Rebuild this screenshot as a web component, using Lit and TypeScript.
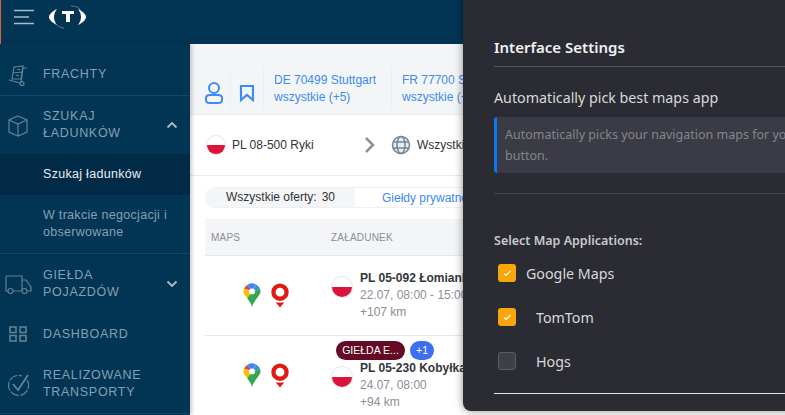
import { LitElement, css, html, svg } from "lit";
import { customElement } from "lit/decorators.js";

const flag = (size: number) => html`<svg class="flag" width=${size} height=${size} viewBox="0 0 22 22">
  <circle cx="11" cy="11" r="10.5" fill="#fff" stroke="#e3e5e8" />
  <path d="M1 11h20a10 10 0 0 1-20 0z" fill="#dc143c" />
</svg>`;

const gmaps = html`<svg width="18" height="25" viewBox="0 0 18 25">
  <path d="M9 24c-1-4-3-6-5-9L9 9z" fill="#34a853" />
  <path d="M9 24c1-4 3-6 5-9 2-2.500 3.500-4.500 3.500-6.500 0-1-.2-2-.6-3L9 9z" fill="#34a853" />
  <path d="M4 15C2 12.500.5 11 .5 8.500c0-1 .2-2 .6-2.800L9 9z" fill="#fbbc04" />
  <path d="M1.100 5.700A8.500 8.500 0 0 1 4 2L9 8z" fill="#ea4335" />
  <path d="M4 2a8.500 8.500 0 0 1 9-.5L9 8z" fill="#4285f4" />
  <path d="M13 1.500a8.500 8.500 0 0 1 3.900 4L9 9z" fill="#4285f4" />
  <circle cx="9" cy="8.500" r="3" fill="#fff" />
</svg>`;

const tomtom = html`<svg width="18" height="25" viewBox="0 0 18 25">
  <path d="M9 .5a8.700 8.700 0 1 1 0 17.400A8.700 8.700 0 0 1 9 .5zm0 4.300a4.400 4.400 0 1 0 0 8.800 4.400 4.400 0 0 0 0-8.800z" fill="#df1b12" fill-rule="evenodd" />
  <path d="M4.800 19.500h8.400L9 24.500z" fill="#df1b12" />
</svg>`;

const navIcons: Record<string, unknown> = {
  cart: svg`<path d="M10 6l9-1-2 13H8zM9 12l9-1M13 8.500h3M12 14.500h3M23 7h-4l-2 15M5 19l11 3" /><circle cx="18" cy="22.500" r="2" />`,
  box: svg`<path d="M14 5l9 4v12l-9 4-9-4V9zM5 9l9 4 9-4M14 13v12" />`,
  truck: svg`<path d="M4 21H2V7q0-1 1-1h15v15M18 10h4l5 7v4h-4M9 21h8" /><circle cx="6.500" cy="21" r="2.500" /><circle cx="20.500" cy="21" r="2.500" />`,
  grid: svg`<g stroke-width="1.600"><rect x="6" y="7" width="6" height="5.500" /><rect x="16" y="7" width="6" height="5.500" /><rect x="6" y="15.500" width="6" height="5.500" /><rect x="16" y="15.500" width="6" height="5.500" /></g>`,
  check: svg`<path d="M23 10a10 10 0 1 1-5-4" stroke-dasharray="9 1.500" /><path d="M9 14l5 6 10-15" stroke-width="1.800" />`,
};

const navIcon = (name: string) => html`<svg class="nav-icon" width="32" height="28" viewBox="0 0 32 28">${navIcons[name]}</svg>`;

const chevron = (up: boolean) => html`<svg class="chev" width="12" height="8" viewBox="0 0 12 8">
  <path d=${up ? "M1.500 6.500L6 2l4.500 4.500" : "M1.500 1.500L6 6l4.500-4.500"} />
</svg>`;

const tick = html`<svg width="10" height="10" viewBox="0 0 10 10"><path d="M2 5.500l2 2 4.500-4.500" fill="none" stroke="#fff" stroke-width="1.200" /></svg>`;

@customElement("app-root")
export class AppRoot extends LitElement {
  static styles = css`
    :host {
      display: block;
      position: relative;
      width: 785px;
      height: 415px;
      overflow: hidden;
      background: #fff;
      font-family: "Liberation Sans", Arial, sans-serif;
      color: #333;
    }
    .topbar {
      height: 44px;
      box-sizing: border-box;
      padding: 0 0 10px 14px;
      background: #023553;
      display: flex;
      align-items: center;
      gap: 15px;
      box-shadow: inset 1px 0 0 #e0603a;
    }
    .body {
      display: flex;
      height: 371px;
    }
    /* sidebar */
    .side {
      width: 190px;
      flex: none;
      background: #023553;
      box-shadow: 2px 0 4px rgba(0, 0, 0, 0.2);
      z-index: 1;
      display: flex;
      flex-direction: column;
    }
    .item {
      display: flex;
      align-items: center;
      box-sizing: border-box;
      color: #82a0b3;
      font-size: 12.500px;
      line-height: 17px;
      letter-spacing: 0.7px;
      position: relative;
    }
    .nav-icon {
      flex: none;
      margin: 0 7px 0 4px;
      fill: none;
      stroke: #5f8299;
      stroke-width: 1.200;
    }
    .chev {
      position: absolute;
      left: 166px;
      fill: none;
      stroke: #a9bdc9;
      stroke-width: 1.800;
    }
    .frachty {
      height: 52px;
      padding-top: 10px;
      border-bottom: 1px solid #0a4a6e;
    }
    .szukaj {
      height: 58px;
    }
    .sub {
      height: 41px;
      box-sizing: border-box;
      padding: 0 0 2px 43px;
      background: #012a47;
      color: #e8eef2;
      font-size: 12.500px;
      letter-spacing: 0.3px;
      display: flex;
      align-items: center;
    }
    .sub2 {
      height: 58px;
      border-bottom: 1px solid #0a4a6e;
      color: #82a0b3;
      font-size: 12.500px;
      line-height: 17px;
      letter-spacing: 0.3px;
      display: flex;
      align-items: center;
      padding-left: 43px;
    }
    .pojazdy {
      height: 60px;
    }
    .dash {
      height: 38px;
      padding-top: 2px;
    }
    .real {
      height: 62px;
      padding-top: 2px;
      border-bottom: 1px solid #0a4a6e;
    }
    /* main */
    .main {
      flex: 1;
      min-width: 0;
      overflow: hidden;
      background: #fff;
    }
    .tabs {
      height: 70px;
      background: #f4f5f7;
      border-bottom: 1px solid #e8eaed;
      display: flex;
      align-items: flex-end;
      white-space: nowrap;
      font-size: 12px;
      line-height: 17px;
      color: #3d8bf5;
    }
    .tab {
      height: 41px;
      box-sizing: border-box;
      display: flex;
      align-items: center;
      border-right: 1px solid #eceef1;
      margin-bottom: 5px;
      flex: none;
    }
    .tab.icon {
      width: 33px;
      justify-content: center;
      padding-top: 9px;
    }
    .tab.icon svg {
      fill: none;
      stroke: #3d8bf5;
      stroke-width: 2;
    }
    .tab.text {
      width: 128px;
      padding-left: 10px;
    }
    .tab.first {
      margin-left: 8px;
    }
    .route {
      height: 60px;
      display: flex;
      align-items: center;
      border-bottom: 1px solid #e8eaed;
      font-size: 12px;
      white-space: nowrap;
      padding-left: 16px;
      color: #333;
    }
    .route .from {
      margin-left: 6px;
      width: 132px;
    }
    .route .globe {
      margin: 0 6px 0 15px;
    }
    .filter {
      height: 43px;
      display: flex;
      align-items: center;
      padding-left: 15px;
      white-space: nowrap;
      font-size: 12px;
    }
    .pill {
      height: 19px;
      display: flex;
      align-items: center;
      border: 1px solid #eef0f2;
      border-radius: 10px 0 0 10px;
    }
    .pill .all {
      width: 149px;
      height: 19px;
      box-sizing: border-box;
      padding-left: 20px;
      background: #f4f5f7;
      border-radius: 10px 0 0 10px;
      line-height: 19px;
      display: flex;
      gap: 5px;
    }
    .pill .priv {
      padding-left: 27px;
      color: #3d8bf5;
    }
    .table {
      margin-left: 15px;
    }
    .thead {
      height: 36px;
      background: #f4f5f7;
      border-bottom: 1px solid #e3e6ea;
      display: flex;
      align-items: center;
      font-size: 10px;
      color: #8a8e94;
      letter-spacing: 0.2px;
    }
    .thead .c1 {
      width: 126px;
      padding-left: 6px;
      box-sizing: border-box;
    }
    .row {
      height: 79px;
      border-bottom: 1px solid #e3e6ea;
      display: flex;
      align-items: center;
      white-space: nowrap;
    }
    .maps {
      width: 126px;
      box-sizing: border-box;
      padding-left: 38px;
      display: flex;
      gap: 10px;
      flex: none;
    }
    .stop {
      display: flex;
      align-items: flex-start;
      gap: 7px;
      position: relative;
    }
    .stop .flag {
      margin-top: 6px;
      flex: none;
    }
    .stop.tagged .flag {
      margin-top: 25px;
    }
    .stop.tagged .lines {
      padding-top: 19px;
    }
    .lines {
      font-size: 12px;
      line-height: 17px;
      color: #8b9097;
    }
    .lines b {
      display: block;
      color: #33363b;
    }
    .tags {
      position: absolute;
      display: flex;
      gap: 5px;
      left: 5px;
      top: 0;
      font-size: 10.500px;
      line-height: 19px;
      color: #fff;
    }
    .tags span {
      border-radius: 10px;
      text-align: center;
      height: 19px;
    }
    .tags .ex {
      width: 69px;
      background: #650a24;
    }
    .tags .more {
      width: 24px;
      background: #3e6ff0;
    }
    /* settings panel lies over the page */
    .panel {
      position: absolute;
      left: 463px;
      top: -10px;
      width: 360px;
      height: 421px;
      box-sizing: border-box;
      padding: 47px 0 0 31px;
      background: #2b2c33;
      border-radius: 8px;
      box-shadow: 0 0 8px rgba(0, 0, 0, 0.45);
      font-family: "Noto Sans", sans-serif;
      color: #d9d9dc;
      white-space: nowrap;
      overflow: hidden;
    }
    h2 {
      margin: 0;
      font-size: 15px;
      line-height: 20px;
      font-weight: 600;
      color: #f1f1f2;
      padding-bottom: 9px;
      border-bottom: 1px solid #55565b;
    }
    .auto {
      font-size: 14.250px;
      line-height: 20px;
      margin-top: 21px;
    }
    .hint {
      margin-top: 9px;
      height: 56px;
      box-sizing: border-box;
      padding: 7px 0 0 8px;
      background: #3a3b44;
      border-left: 3px solid #0a78f5;
      border-radius: 3px;
      font-size: 12.500px;
      line-height: 21px;
      color: #85868c;
      white-space: pre;
      overflow: hidden;
    }
    .sep {
      margin-top: 20px;
      border-top: 1px solid #47484d;
    }
    .select {
      margin-top: 39px;
      font-size: 12.500px;
      line-height: 16px;
      font-weight: 600;
      color: #c9c9cc;
    }
    .opt {
      display: flex;
      align-items: center;
      height: 44px;
      padding-left: 4px;
      font-size: 14.250px;
    }
    .opts {
      margin-top: 2px;
    }
    .box {
      width: 18px;
      height: 18px;
      border-radius: 3px;
      background: #f9a60a;
      display: flex;
      align-items: center;
      justify-content: center;
      flex: none;
    }
    .box.off {
      background: #3f4045;
      box-sizing: border-box;
      border: 1px solid #5c5d62;
    }
    .opt .gm {
      margin-left: 10px;
    }
    .opt .tt {
      margin-left: 20px;
    }
    .end {
      margin-top: 10px;
      border-top: 1px solid #e4e4e6;
    }
  `;

  render() {
    return html`
      <div class="topbar">
        <svg width="20" height="16" viewBox="0 0 20 16"><path d="M0 1.500h20M0 8h15M0 14.500h20" stroke="#a9bdc9" stroke-width="1.500" /></svg>
        <svg width="38" height="26" viewBox="0 0 38 26">
          <path d="M8 5C2 8 0 11 0 13s2 5 8 8c-2-3-3-5-3-8s1-5 3-8z" fill="#fff" />
          <path d="M29 5c6 3 8 6 8 8s-2 5-8 8c2-3 3-5 3-8s-1-5-3-8z" fill="#fff" />
          <path d="M13 7h12v3h-4v8h-4v-8h-4z" fill="#fff" />
          <path d="M22 2c4 0 7 1 9 3M6 19c3 4 7 5 9 5" fill="none" stroke="#7d9bad" stroke-width=".7" />
        </svg>
      </div>
      <div class="body">
        <nav class="side">
          <div class="item frachty">${navIcon("cart")}FRACHTY</div>
          <div class="item szukaj">${navIcon("box")}<span>SZUKAJ<br />ŁADUNKÓW</span>${chevron(true)}</div>
          <div class="sub">Szukaj ładunków</div>
          <div class="sub2"><span>W trakcie negocjacji i<br />obserwowane</span></div>
          <div class="item pojazdy">${navIcon("truck")}<span>GIEŁDA<br />POJAZDÓW</span>${chevron(false)}</div>
          <div class="item dash">${navIcon("grid")}DASHBOARD</div>
          <div class="item real">${navIcon("check")}<span>REALIZOWANE<br />TRANSPORTY</span></div>
        </nav>
        <main class="main">
          <div class="tabs">
            <div class="tab icon first">
              <svg width="20" height="24" viewBox="0 0 20 24"><circle cx="10" cy="7" r="5" /><path d="M2 17c0-2 2-3 4-3h8c2 0 4 1 4 3v2c0 2-2 3-4 3H6c-2 0-4-1-4-3z" /></svg>
            </div>
            <div class="tab icon">
              <svg width="16" height="18" viewBox="0 0 16 18"><path d="M2 2h12v14l-6-5-6 5z" stroke-width="2.200" /></svg>
            </div>
            <div class="tab text"><span>DE 70499 Stuttgart<br />wszystkie (+5)</span></div>
            <div class="tab text"><span>FR 77700 Serris<br />wszystkie (+3)</span></div>
          </div>
          <div class="route">
            ${flag(20)}
            <span class="from">PL 08-500 Ryki</span>
            <svg width="12" height="18" viewBox="0 0 12 18"><path d="M2 2l7 7-7 7" fill="none" stroke="#8d9194" stroke-width="2.500" /></svg>
            <svg class="globe" width="20" height="20" viewBox="0 0 20 20" fill="none" stroke="#6f8796" stroke-width="1.500"><circle cx="10" cy="10" r="8.500" fill="#e9ecee" /><ellipse cx="10" cy="10" rx="4" ry="8.500" /><path d="M2 7h16M2 13h16" /></svg>
            <span>Wszystkie</span>
          </div>
          <div class="filter">
            <div class="pill">
              <div class="all"><span>Wszystkie oferty:</span><span>30</span></div>
              <div class="priv">Giełdy prywatne</div>
            </div>
          </div>
          <div class="table">
            <div class="thead"><div class="c1">MAPS</div><div>ZAŁADUNEK</div></div>
            <div class="row">
              <div class="maps">${gmaps}${tomtom}</div>
              <div class="stop">
                ${flag(22)}
                <div class="lines"><b>PL 05-092 Łomianki</b>22.07, 08:00 - 15:00<br />+107 km</div>
              </div>
            </div>
            <div class="row">
              <div class="maps">${gmaps}${tomtom}</div>
              <div class="stop tagged">
                <div class="tags"><span class="ex">GIEŁDA E...</span><span class="more">+1</span></div>
                ${flag(22)}
                <div class="lines"><b>PL 05-230 Kobyłka</b>24.07, 08:00<br />+94 km</div>
              </div>
            </div>
          </div>
        </main>
      </div>
      <aside class="panel">
        <h2>Interface Settings</h2>
        <div class="auto">Automatically pick best maps app</div>
        <div class="hint">Automatically picks your navigation maps for your location
button.</div>
        <div class="sep"></div>
        <div class="select">Select Map Applications:</div>
        <div class="opts">
          <div class="opt"><span class="box">${tick}</span><span class="gm">Google Maps</span></div>
          <div class="opt"><span class="box">${tick}</span><span class="tt">TomTom</span></div>
          <div class="opt"><span class="box off"></span><span class="tt">Hogs</span></div>
        </div>
        <div class="end"></div>
      </aside>
    `;
  }
}
